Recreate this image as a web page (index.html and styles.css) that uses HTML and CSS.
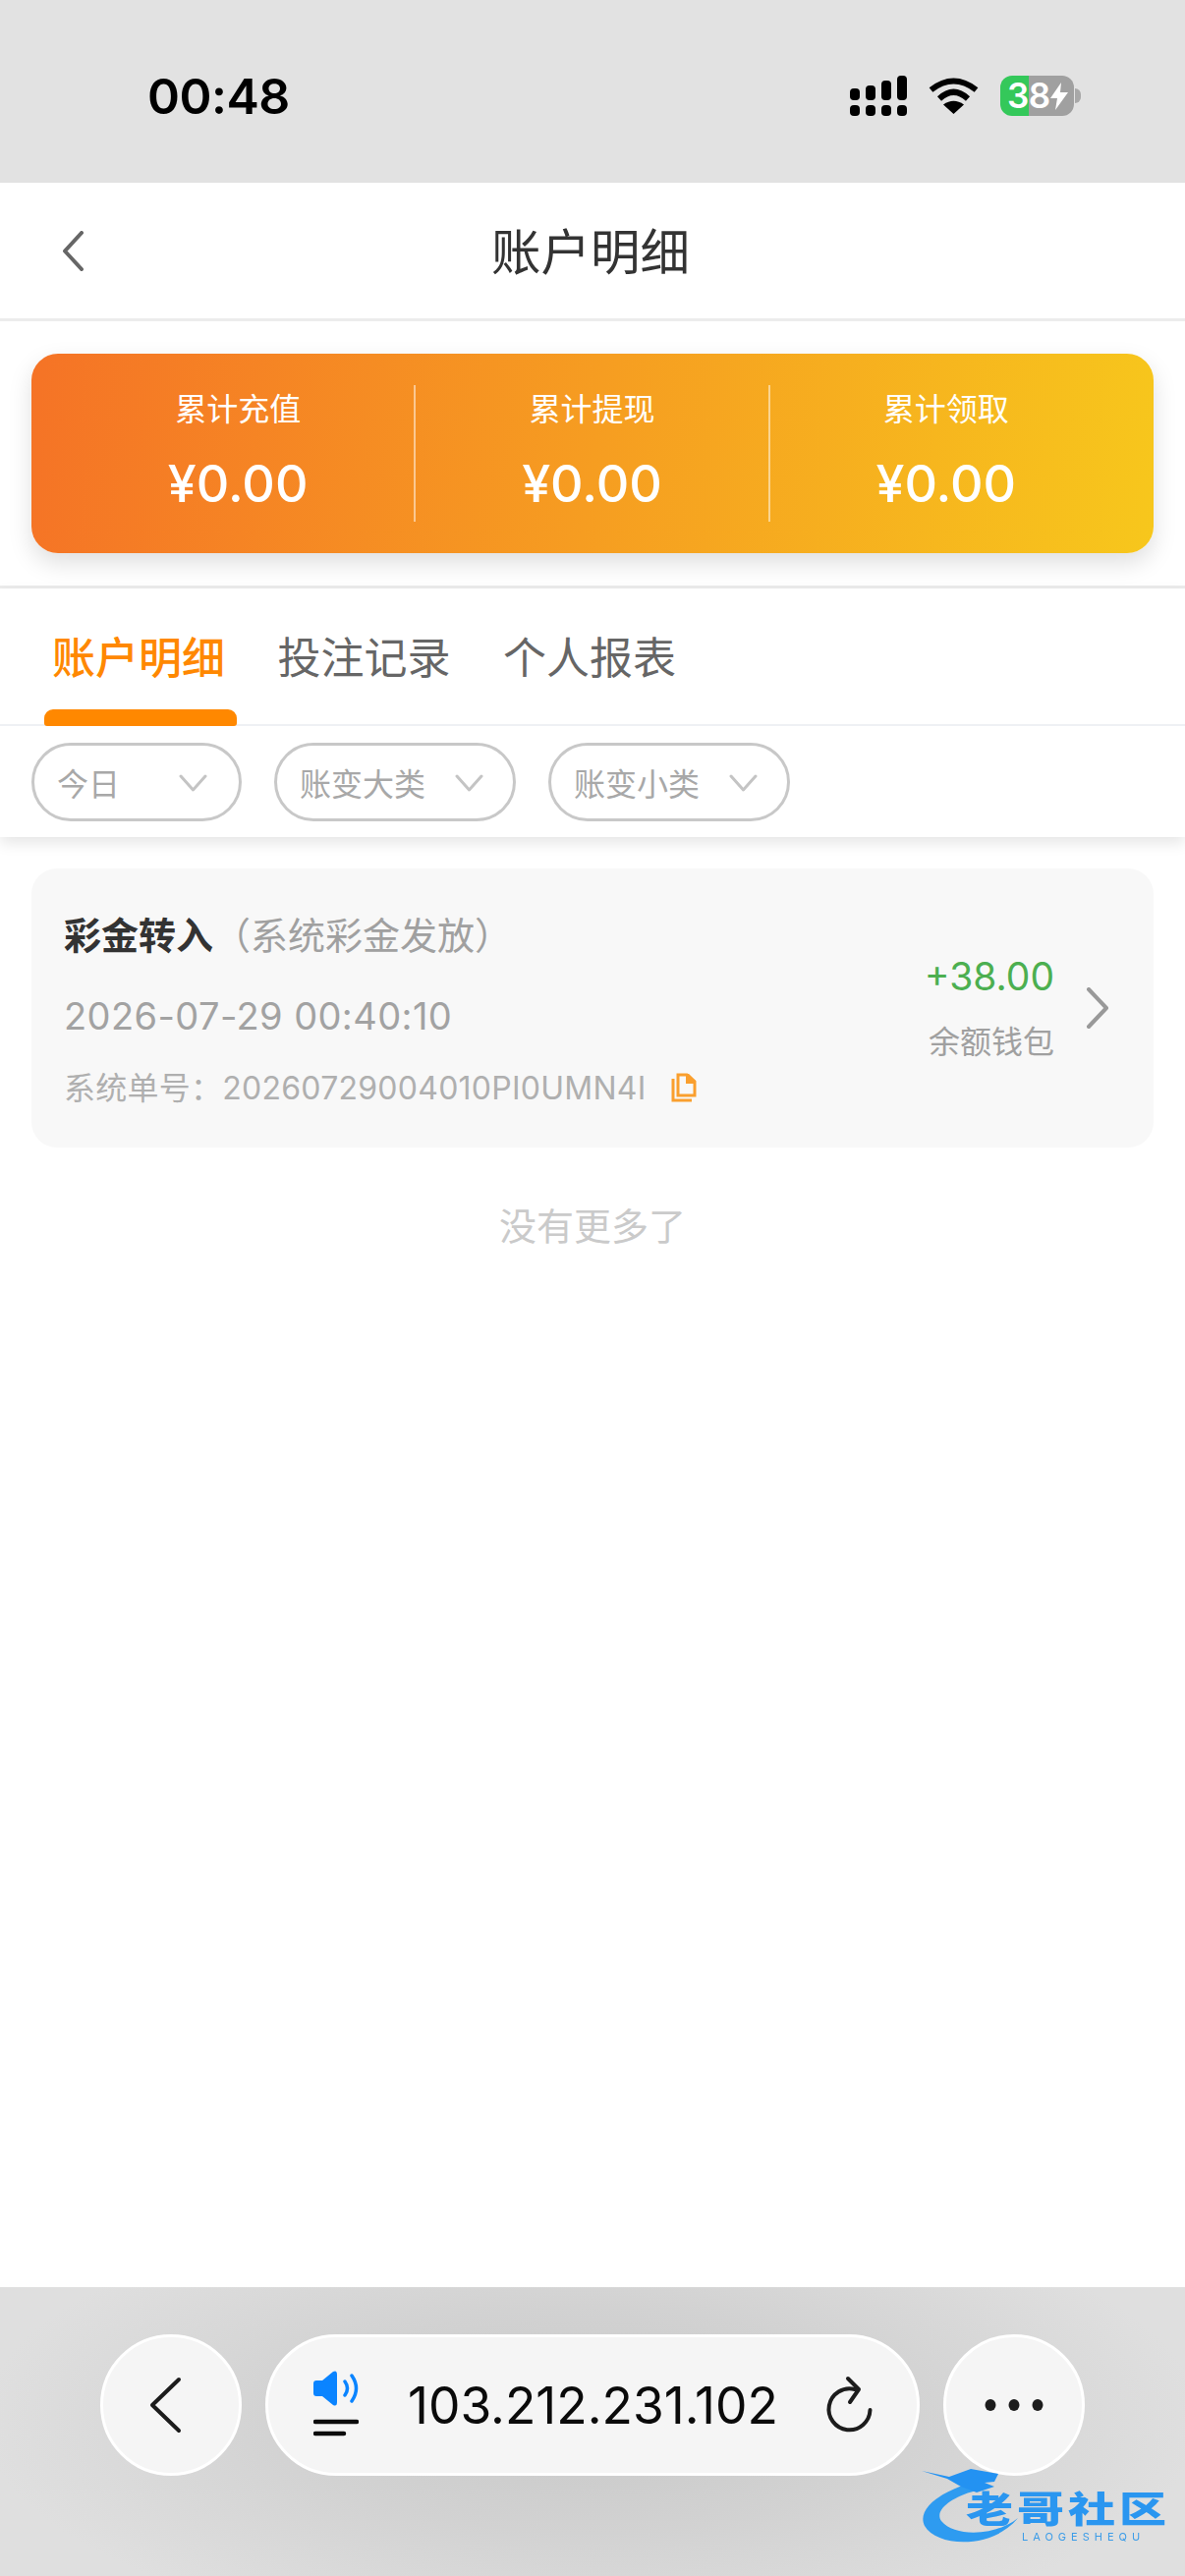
FILE: index.html
```html
<!DOCTYPE html>
<html lang="zh-CN">
<head>
<meta charset="utf-8">
<title>账户明细</title>
<link rel="stylesheet" href="styles.css">
</head>
<body>
<div class="page">
  <header class="status">
    <span class="time">00:48</span>
    <div class="status-icons">
      <svg class="signal" width="58" height="41" viewBox="0 0 58 41"><g fill="#000"><rect x="0" y="13" width="10" height="12" rx="4"/><rect x="16" y="10" width="10" height="15" rx="4"/><rect x="32" y="5" width="10" height="20" rx="4"/><rect x="48" y="0" width="10" height="25" rx="4"/><rect x="0" y="30" width="10" height="11" rx="4"/><rect x="16" y="30" width="10" height="11" rx="4"/><rect x="32" y="30" width="10" height="11" rx="4"/><rect x="48" y="30" width="10" height="11" rx="4"/></g></svg>
      <svg class="wifi" width="51" height="37" viewBox="0 0 51 37"><g fill="none" stroke="#000" stroke-width="6"><path d="M2.5 12.5Q25.5-5.500 48.500 12.500"/><path d="M11 21.500Q25.500 8 40 21.500"/></g><path d="M25.500 37L15 27.500Q25.500 20 36 27.500Z" fill="#000"/></svg>
      <div class="battery"><span class="bat-text">38</span><svg class="bolt" width="18" height="28" viewBox="0 0 18 28"><path d="M11 0L0 16H7L5 28L18 10H10Z" fill="#fff"/></svg></div>
    </div>
  </header>

  <nav class="nav">
    <svg class="nav-back" width="22" height="41" viewBox="0 0 22 41"><path d="M20 2L3 20.500L20 39" fill="none" stroke="#666" stroke-width="4" stroke-linecap="round" stroke-linejoin="round"/></svg>
    <h1 class="nav-title">账户明细</h1>
  </nav>

  <section class="summary">
    <div class="summary-card">
      <div class="stat"><span class="stat-label">累计充值</span><span class="stat-value">¥0.00</span></div>
      <div class="stat"><span class="stat-label">累计提现</span><span class="stat-value">¥0.00</span></div>
      <div class="stat"><span class="stat-label">累计领取</span><span class="stat-value">¥0.00</span></div>
    </div>
  </section>

  <section class="panel">
    <div class="tabs">
      <div class="tab active">账户明细</div>
      <div class="tab">投注记录</div>
      <div class="tab">个人报表</div>
    </div>
    <div class="filters">
      <div class="pill pill-date"><span>今日</span><svg class="pill-arrow" width="29" height="19" viewBox="0 0 29 19"><path d="M2 2L14.500 16L27 2" fill="none" stroke="#c4c4c4" stroke-width="3" stroke-linecap="round" stroke-linejoin="round"/></svg></div>
      <div class="pill"><span>账变大类</span><svg class="pill-arrow" width="29" height="19" viewBox="0 0 29 19"><path d="M2 2L14.500 16L27 2" fill="none" stroke="#c4c4c4" stroke-width="3" stroke-linecap="round" stroke-linejoin="round"/></svg></div>
      <div class="pill"><span>账变小类</span><svg class="pill-arrow" width="29" height="19" viewBox="0 0 29 19"><path d="M2 2L14.500 16L27 2" fill="none" stroke="#c4c4c4" stroke-width="3" stroke-linecap="round" stroke-linejoin="round"/></svg></div>
    </div>
  </section>

  <main class="list">
    <article class="item">
      <div class="item-main">
        <div class="item-title"><b>彩金转入</b><span>（系统彩金发放）</span></div>
        <div class="item-date">2026-07-29 00:40:10</div>
        <div class="item-order"><span>系统单号：20260729004010PI0UMN4I</span>
          <svg class="copy" width="26" height="30" viewBox="0 0 26 30"><g fill="none" stroke="#fa9f2e" stroke-width="3"><path d="M7 2H16L24 9V23H7Z"/><path d="M2 6V28H21"/></g><path d="M15 1H18L25 8V11H15Z" fill="#fa9f2e"/></svg>
        </div>
      </div>
      <div class="item-side">
        <div class="item-amount">+38.00</div>
        <div class="item-wallet">余额钱包</div>
      </div>
      <svg class="item-arrow" width="24" height="42" viewBox="0 0 24 42"><path d="M3 2L21 21L3 40" fill="none" stroke="#999" stroke-width="4" stroke-linecap="round" stroke-linejoin="round"/></svg>
    </article>
    <p class="no-more">没有更多了</p>
  </main>

  <footer class="toolbar">
    <div class="round-btn">
      <svg width="34" height="58" viewBox="0 0 34 58"><path d="M31 3L4 29L31 55" fill="none" stroke="#1c1c1c" stroke-width="4" stroke-linecap="round" stroke-linejoin="round"/></svg>
    </div>
    <div class="url-bar">
      <svg class="url-icon" width="46" height="68" viewBox="0 0 46 68"><path d="M0 13Q0 10 3 10H9L20 1Q24-1 24 4V32Q24 37 20 35L9 26H3Q0 26 0 23Z" fill="#0a84ff"/><path d="M32 11Q37 18 32 25M39 5Q48 18 39 31" fill="none" stroke="#0a84ff" stroke-width="3.500" stroke-linecap="round"/><path d="M2 52H44M2 64H31" fill="none" stroke="#0c0c0c" stroke-width="4.500" stroke-linecap="round"/></svg>
      <span class="url-text">103.212.231.102</span>
      <svg class="reload" width="50" height="60" viewBox="0 0 50 60"><g fill="none" stroke="#1c1c1c" stroke-width="4" stroke-linecap="round" stroke-linejoin="round"><path d="M23 3L34 14L25 27"/><path d="M30 14A21 21 0 1 0 45.500 35"/></g></svg>
    </div>
    <div class="round-btn">
      <svg width="60" height="14" viewBox="0 0 60 14"><g fill="#1c1c1c"><ellipse cx="6" cy="7" rx="5.500" ry="6"/><ellipse cx="30" cy="7" rx="5.500" ry="6"/><ellipse cx="54" cy="7" rx="5.500" ry="6"/></g></svg>
    </div>
    <div class="watermark">
      <svg class="wm-dragon" width="110" height="80" viewBox="0 0 110 80"><path d="M62 11C16 22-5 42 3 58C16 80 72 82 98 50C76 68 34 70 20 53C11 40 38 24 66 20Z" fill="#2e9bf0"/><path d="M0 2L28 8L50 0L78 5L74 13L64 14L74 18L56 24L40 18L26 10Z" fill="#2392f2"/></svg>
      <span class="wm-title">老哥社区</span>
      <span class="wm-sub">LAOGESHEQU</span>
    </div>
  </footer>
</div>
</body>
</html>
```
FILE: styles.css
```css
* { box-sizing: border-box; margin: 0; padding: 0; }
html, body { width: 1206px; height: 2622px; overflow: hidden; background: #fff; }
body { font-family: Inter, "Noto Sans CJK SC", "Noto Sans", sans-serif; }
.page { width: 1206px; height: 2622px; display: flex; flex-direction: column; background: #fff; }

/* status bar */
.status { height: 186px; background: #e2e2e2; display: flex; justify-content: space-between; align-items: flex-start; padding: 70px 113px 0 150px; flex: none; }
.time { font-size: 50px; line-height: 56px; font-weight: 600; color: #000; letter-spacing: -0.5px; }
.status-icons { display: flex; align-items: center; margin-top: 7px; }
.signal { margin-right: 22px; }
.wifi { margin-right: 22px; }
.battery { position: relative; width: 75px; height: 41px; border-radius: 12px; background: linear-gradient(90deg, #34c85a 0, #34c85a 29px, #a0a0a0 29px, #a0a0a0 100%); display: flex; align-items: center; padding-left: 7px; }
.battery::after { content: ""; position: absolute; right: -7px; top: 13px; width: 6px; height: 15px; background: #a8a8a8; border-radius: 0 8px 8px 0; }
.bat-text { font-size: 35px; line-height: 41px; font-weight: 600; color: #fff; letter-spacing: -0.5px; }

/* nav */
.nav { height: 141px; flex: none; background: #fff; border-bottom: 3px solid #ececec; display: flex; align-items: center; justify-content: center; position: relative; padding: 3px 4px 0 0; }
.nav-back { position: absolute; left: 63px; top: 49px; }
.nav-title { font-size: 50.500px; font-weight: 400; line-height: 70px; color: #333; }

/* summary */
.summary { padding: 33px 32px 33px; border-bottom: 3px solid #ececec; flex: none; height: 272px; }
.summary-card { height: 203px; border-radius: 27px; background: linear-gradient(97deg, #f57326 0%, #f7c71c 100%); box-shadow: 0 10px 24px rgba(0, 0, 0, 0.13); display: flex; padding: 32px 28px; }
.stat { flex: 1; display: flex; flex-direction: column; align-items: center; color: #fff; border-right: 2px solid rgba(255, 255, 255, 0.5); }
.stat:first-child { padding-left: 3px; }
.stat:last-child { border-right: 0; padding-right: 4px; }
.stat-label { font-size: 32px; line-height: 44px; margin-top: 3px; }
.stat-value { font-size: 52px; line-height: 62px; font-weight: 500; margin-top: 23px; }

/* tabs */
.panel { flex: none; background: #fff; box-shadow: 0 6px 14px rgba(0, 0, 0, 0.1); position: relative; height: 253px; }
.tabs { height: 140px; padding: 0 0 0 45px; display: flex; border-bottom: 2px solid #eef0f4; gap: 33.500px; }
.tab { position: relative; width: 196px; height: 140px; padding: 40px 4px 0 0; text-align: center; font-size: 44px; line-height: 62px; color: #666; }
.tab.active { color: #ff8800; font-weight: 500; }
.tab.active::after { content: ""; position: absolute; left: 0; right: 0; bottom: 0; height: 17px; border-radius: 9px 9px 3px 3px; background: #ff8800; }
.filters { display: flex; gap: 33px; padding: 17px 0 0 32px; }
.pill { width: 246px; height: 80px; border: 3px solid #c8c8c8; border-radius: 40px; padding: 0 30px 0 23px; display: flex; align-items: center; justify-content: space-between; font-size: 32px; color: #a8a8a8; background: #fff; }
.pill-date { width: 214px; padding-right: 32px; }
.pill-arrow { flex: none; margin-top: 2px; }

/* list */
.list { flex: 1; padding: 32px 32px 0; background: #fff; }
.item { height: 284px; border-radius: 26px; background: #f8f8f8; display: flex; align-items: center; padding: 0 45px 0 33px; }
.item-main { flex: 1; margin-top: 3px; }
.item-title { font-size: 38px; line-height: 50px; color: #a0a0a0; display: flex; }
.item-title b { color: #333; font-weight: 700; }
.item-date { font-size: 38px; line-height: 50px; color: #a2a2a2; margin-top: 32px; letter-spacing: 0.4px; }
.item-order { font-size: 32px; line-height: 42px; color: #afafaf; margin-top: 28px; display: flex; align-items: center; gap: 25px; letter-spacing: 0.25px; }
.copy { flex: none; margin-top: -2px; }
.item-side { width: 140px; display: flex; flex-direction: column; align-items: flex-end; margin-right: 32px; margin-top: -1px; }
.item-amount { font-size: 39px; line-height: 54px; color: #4caf50; }
.item-wallet { font-size: 32px; line-height: 46px; color: #a0a0a0; margin-top: 17px; }
.item-arrow { flex: none; margin-top: 0; }
.no-more { text-align: center; font-size: 38px; line-height: 54px; color: #cacaca; margin-top: 53px; }

/* toolbar */
.toolbar { height: 294px; flex: none; background: radial-gradient(ellipse 620px 230px at 50% 46%, #c8c8c8 0%, #d2d2d2 50%, #dfdfdf 100%); position: relative; display: flex; padding: 48px 102px 0; gap: 24px; align-items: flex-start; }
.round-btn { width: 144px; height: 144px; border-radius: 50%; background: #f5f5f5; border: 3px solid #fff; display: flex; align-items: center; justify-content: center; flex: none; }
.round-btn:first-child svg { margin-right: 12px; }
.url-bar { width: 666px; height: 144px; border-radius: 72px; background: #f5f5f5; border: 3px solid #fff; display: flex; align-items: center; padding: 0 43px 0 46px; flex: none; position: relative; }
.url-icon { flex: none; margin-top: -2px; }
.url-text { font-size: 51.500px; line-height: 60px; color: #0a0a0a; margin-left: 50px; flex: 1; white-space: nowrap; }
.reload { flex: none; }

/* watermark overlay */
.watermark { position: absolute; left: 938px; top: 185px; width: 250px; height: 80px; filter: blur(0.7px); }
.wm-dragon { position: absolute; left: 0; top: 0; }
.wm-title { position: absolute; left: 45px; top: 24px; width: 210px; font-size: 48px; line-height: 46px; font-weight: 900; color: #2a96f0; letter-spacing: 4px; white-space: nowrap; transform: scaleY(0.78); transform-origin: top left; }
.wm-sub { position: absolute; left: 102px; top: 62px; font-size: 11px; line-height: 14px; letter-spacing: 5px; color: #3b9ce8; white-space: nowrap; }
```
